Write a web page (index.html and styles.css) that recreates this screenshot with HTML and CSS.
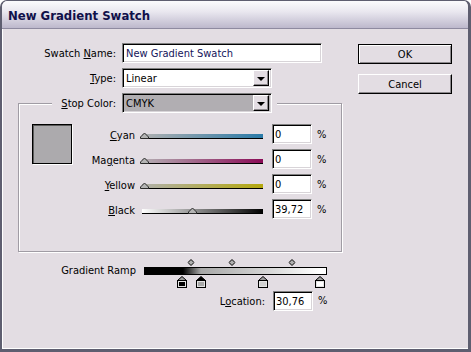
FILE: index.html
```html
<!DOCTYPE html>
<html lang="en">
<head>
    <meta charset="UTF-8">
    <title>New Gradient Swatch</title>
    <link rel="stylesheet" href="styles.css">
</head>
<body>
    <div class="window">
        <div class="titlebar">New Gradient Swatch</div>
        <div class="client">
            <div class="main">
                <div class="field-row">
                    <label class="lbl">Swatch <u>N</u>ame:</label>
                    <div class="edit name-edit">New Gradient Swatch</div>
                </div>
                <div class="field-row">
                    <label class="lbl"><u>T</u>ype:</label>
                    <div class="combo">
                        <span class="combo-text">Linear</span>
                        <span class="combo-btn"><span class="arrow"></span></span>
                    </div>
                </div>

                <fieldset class="group">
                    <legend>
                        <div class="legend-row">
                            <label class="lbl lbl-legend"><u>S</u>top Color:</label>
                            <div class="combo combo-gray">
                                <span class="combo-text">CMYK</span>
                                <span class="combo-btn"><span class="arrow"></span></span>
                            </div>
                        </div>
                    </legend>
                    <div class="color-grid">
                        <div class="swatch"></div>

                        <label class="slider-lbl"><u>C</u>yan</label>
                        <div class="slider"><div class="track track-cyan"></div>
                            <svg class="thumb" style="left: -2px" width="9" height="7" viewBox="0 0 9 7"><path d="M0.5 6.5 V5 L4.5 1 L8.5 5 V6.5 Z" fill="#b4b4b4" stroke="#2a2a2a"/></svg>
                        </div>
                        <div class="edit num-edit">0</div>
                        <span class="pct">%</span>

                        <label class="slider-lbl">Ma<u>g</u>enta</label>
                        <div class="slider"><div class="track track-magenta"></div>
                            <svg class="thumb" style="left: -2px" width="9" height="7" viewBox="0 0 9 7"><path d="M0.5 6.5 V5 L4.5 1 L8.5 5 V6.5 Z" fill="#b4b4b4" stroke="#2a2a2a"/></svg>
                        </div>
                        <div class="edit num-edit">0</div>
                        <span class="pct">%</span>

                        <label class="slider-lbl"><u>Y</u>ellow</label>
                        <div class="slider"><div class="track track-yellow"></div>
                            <svg class="thumb" style="left: -2px" width="9" height="7" viewBox="0 0 9 7"><path d="M0.5 6.5 V5 L4.5 1 L8.5 5 V6.5 Z" fill="#b4b4b4" stroke="#2a2a2a"/></svg>
                        </div>
                        <div class="edit num-edit">0</div>
                        <span class="pct">%</span>

                        <label class="slider-lbl"><u>B</u>lack</label>
                        <div class="slider"><div class="track track-black"></div>
                            <svg class="thumb" style="left: 46px" width="9" height="7" viewBox="0 0 9 7"><path d="M0.5 6.5 V5 L4.5 1 L8.5 5 V6.5 Z" fill="#b4b4b4" stroke="#2a2a2a"/></svg>
                        </div>
                        <div class="edit num-edit">39,72</div>
                        <span class="pct">%</span>
                    </div>
                </fieldset>

                <div class="ramp-row">
                    <label class="ramp-lbl">Gradient Ramp</label>
                    <div class="ramp">
                        <div class="ramp-mids">
                            <svg class="mid" style="left: 25.9%" width="7" height="7" viewBox="0 0 7 7"><path d="M3.5 0.5 L6.5 3.5 L3.5 6.5 L0.5 3.5 Z" fill="#b0b0b0" stroke="#000"/></svg>
                            <svg class="mid" style="left: 48.1%" width="7" height="7" viewBox="0 0 7 7"><path d="M3.5 0.5 L6.5 3.5 L3.5 6.5 L0.5 3.5 Z" fill="#b0b0b0" stroke="#000"/></svg>
                            <svg class="mid" style="left: 80.9%" width="7" height="7" viewBox="0 0 7 7"><path d="M3.5 0.5 L6.5 3.5 L3.5 6.5 L0.5 3.5 Z" fill="#b0b0b0" stroke="#000"/></svg>
                        </div>
                        <div class="ramp-bar"></div>
                        <div class="ramp-stops">
                            <svg class="stop" style="left: 21%" width="10" height="12" viewBox="0 0 10 12"><path d="M0.5 4.5 L5 0.5 L9.5 4.5 Z" fill="#9c9c9c" stroke="#000"/><rect x="0.5" y="4.5" width="9" height="7" fill="#e4e4e4" stroke="#000"/><rect x="2" y="6" width="6" height="4" fill="#000"/></svg>
                            <svg class="stop" style="left: 30.9%" width="10" height="12" viewBox="0 0 10 12"><path d="M0.5 4.5 L5 0.5 L9.5 4.5 Z" fill="#000" stroke="#000"/><rect x="0.5" y="4.5" width="9" height="7" fill="#e4e4e4" stroke="#000"/><rect x="2" y="6" width="6" height="4" fill="#a8a8a8"/></svg>
                            <svg class="stop" style="left: 65.3%" width="10" height="12" viewBox="0 0 10 12"><path d="M0.5 4.5 L5 0.5 L9.5 4.5 Z" fill="#9c9c9c" stroke="#000"/><rect x="0.5" y="4.5" width="9" height="7" fill="#e4e4e4" stroke="#000"/><rect x="2" y="6" width="6" height="4" fill="#d2d2d2"/></svg>
                            <svg class="stop" style="left: 96.4%" width="10" height="12" viewBox="0 0 10 12"><path d="M0.5 4.5 L5 0.5 L9.5 4.5 Z" fill="#9c9c9c" stroke="#000"/><rect x="0.5" y="4.5" width="9" height="7" fill="#e4e4e4" stroke="#000"/><rect x="2" y="6" width="6" height="4" fill="#fff"/></svg>
                        </div>
                    </div>
                </div>

                <div class="location-row">
                    <label class="loc-lbl">L<u>o</u>cation:</label>
                    <div class="edit num-edit">30,76</div>
                    <span class="pct">%</span>
                </div>
            </div>

            <div class="buttons">
                <button class="btn btn-default">OK</button>
                <button class="btn">Cancel</button>
            </div>
        </div>
    </div>
</body>
</html>
```

FILE: styles.css
```css
html {
    background: #fff;
}
body {
    margin: 0;
    font-family: "DejaVu Sans Condensed", "DejaVu Sans", sans-serif;
    font-size: 11px;
    color: #000;
}
.window {
    width: 471px;
    height: 352px;
    box-sizing: border-box;
    border: solid #5e5e70;
    border-width: 1px 3px 3px 2px;
    border-radius: 7px 7px 0 0;
    background: #e3dde3;
    display: flex;
    flex-direction: column;
    overflow: hidden;
}
.titlebar {
    height: 27px;
    border-bottom: 1px solid #8e8aa0;
    background: linear-gradient(#fbfbfd, #e9e7ef 40%, #bdb8cc);
    padding-left: 6px;
    font-weight: bold;
    font-size: 13px;
    line-height: 30px;
    color: #10104a;
}
.client {
    flex: 1;
    display: flex;
    padding-top: 14px;
    border-left: 1px solid #fff;
    border-bottom: 1px solid #fff;
}
.main {
    width: 324px;
    margin-left: 15px;
}
.buttons {
    margin-left: 16px;
    margin-top: 1px;
    display: flex;
    flex-direction: column;
    gap: 10px;
}
.btn {
    width: 94px;
    height: 20px;
    padding: 0;
    font: inherit;
    color: #000;
    background: #e3dde3;
    border: 1px solid;
    border-color: #fff #000 #000 #fff;
    box-shadow: inset -1px -1px 0 #8c888c;
}
.btn-default {
    border-color: #000;
    box-shadow: inset 1px 1px 0 #fff, inset -1px -1px 0 #8c888c;
}

/* label + field rows */
.field-row {
    display: flex;
    align-items: center;
    margin-bottom: 5px;
}
.lbl {
    width: 98px;
    text-align: right;
    margin-right: 6px;
}
.lbl-legend {
    width: 60px;
}
.edit {
    box-sizing: border-box;
    height: 20px;
    background: #fff;
    border: 1px solid;
    border-color: #808080 #fff #fff #808080;
    box-shadow: inset 1px 1px 0 #000, inset -1px -1px 0 #d8d4d8;
    padding: 0 3px;
    line-height: 19px;
    white-space: nowrap;
}
.name-edit {
    width: 200px;
    color: #14145a;
}
.combo {
    box-sizing: border-box;
    width: 150px;
    height: 20px;
    display: flex;
    background: #fff;
    border: 1px solid;
    border-color: #808080 #fff #fff #808080;
    box-shadow: inset 1px 1px 0 #000, inset -1px -1px 0 #d8d4d8;
    padding: 2px 2px 2px 3px;
}
.combo-gray {
    background: #b1aeb2;
}
.combo-text {
    flex: 1;
    line-height: 15px;
}
.combo-btn {
    box-sizing: border-box;
    width: 16px;
    height: 16px;
    margin-top: -1px;
    background: #e3dde3;
    border: 1px solid;
    border-color: #fff #000 #000 #fff;
    box-shadow: inset -1px -1px 0 #8c888c;
    display: flex;
    align-items: center;
    justify-content: center;
}
.arrow {
    width: 0;
    height: 0;
    border-top: 4px solid #000;
    border-left: 4px solid transparent;
    border-right: 4px solid transparent;
    margin-top: 1px;
}

/* group box */
.group {
    box-sizing: border-box;
    width: 324px;
    margin: 0;
    padding: 11px 0 32px 0;
    min-width: 0;
    border: 1px solid #a09ca4;
    box-shadow: 1px 1px 0 #fff, inset 1px 1px 0 #fff;
}
.group legend {
    margin-left: 33px;
    padding: 0 5px 0 4px;
    background: #e3dde3;
}
.legend-row {
    display: flex;
    align-items: center;
}
.color-grid {
    display: grid;
    grid-template-columns: 40px 63px 128px 49px auto;
    grid-auto-rows: 20px;
    row-gap: 5px;
    padding-left: 13px;
}
.swatch {
    grid-row: 1 / span 4;
    box-sizing: border-box;
    width: 40px;
    height: 40px;
    background: #acaaad;
    border: 1px solid #000;
    box-shadow: inset 1px 1px 0 #5a5a5a, 1px 1px 0 #fff;
}
.slider-lbl {
    grid-column: 2;
    text-align: right;
    line-height: 23px;
}
.slider {
    position: relative;
    margin-left: 7px;
    width: 121px;
}
.track {
    margin-top: 10px;
    height: 4px;
    border-bottom: 1px solid #000;
}
.track-cyan {
    background: linear-gradient(to right, #b0b0b0, #2a7aa8);
}
.track-magenta {
    background: linear-gradient(to right, #b4b0b4, #8a0a56);
}
.track-yellow {
    background: linear-gradient(to right, #b0b0ac, #b4a80e);
}
.track-black {
    background: linear-gradient(to right, #fff, #000);
}
.thumb {
    position: absolute;
    top: 8px;
    display: block;
}
.num-edit {
    width: 40px;
    margin-left: 9px;
    padding: 0 2px;
}
.pct {
    padding-left: 5px;
    line-height: 22px;
}

/* gradient ramp */
.ramp-row {
    display: flex;
    margin-top: 7px;
}
.ramp-lbl {
    width: 118px;
    margin-right: 8px;
    text-align: right;
    padding-top: 5px;
    line-height: 14px;
}
.ramp {
    width: 183px;
}
.ramp-mids, .ramp-stops {
    position: relative;
    height: 8px;
}
.ramp-stops {
    height: 13px;
}
.mid {
    position: absolute;
    top: 0;
    transform: translateX(-50%);
    display: block;
}
.stop {
    position: absolute;
    top: 1px;
    transform: translateX(-50%);
    display: block;
}
.ramp-bar {
    box-sizing: border-box;
    height: 8px;
    border: 1px solid #000;
    background: linear-gradient(to right, #000 0%, #000 21%, #a8a8a8 30.9%, #d2d2d2 65.3%, #fff 96.4%);
}
.location-row {
    display: flex;
    align-items: center;
    margin-top: 2px;
}
.loc-lbl {
    width: 247px;
    text-align: right;
}
.location-row .num-edit {
    margin-left: 8px;
}
```
